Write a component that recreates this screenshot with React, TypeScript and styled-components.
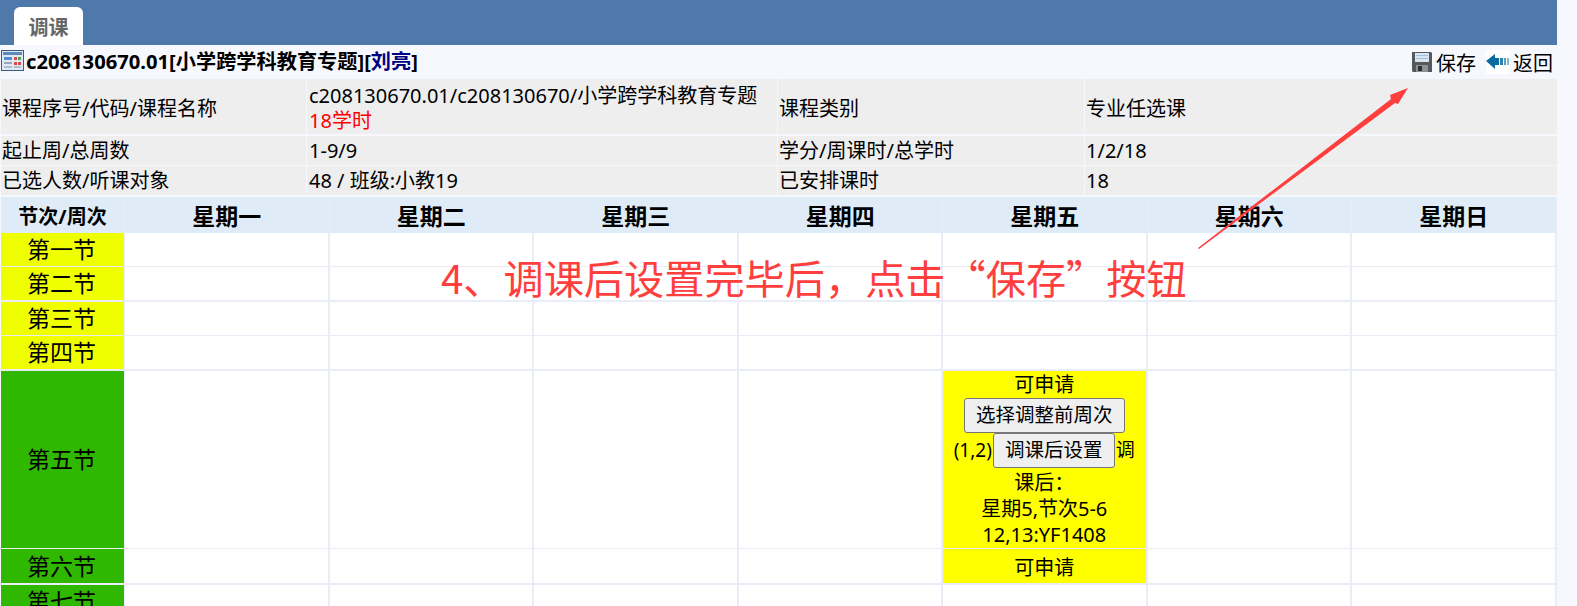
import React from "react"
import styled, { createGlobalStyle } from "styled-components"

const Global = createGlobalStyle`
html, body { margin: 0; padding: 0; background: #f6f8fd; overflow: hidden; }
body { font-family: "Noto Sans", "Noto Sans CJK SC", sans-serif; color: #000; }
`

const days = ["星期一", "星期二", "星期三", "星期四", "星期五", "星期六", "星期日"]

type Section = { name: string; tone: "yellow" | "green"; height: number; thick?: boolean }

const sections: Section[] = [
  { name: "第一节", tone: "yellow", height: 34 },
  { name: "第二节", tone: "yellow", height: 35, thick: true },
  { name: "第三节", tone: "yellow", height: 34 },
  { name: "第四节", tone: "yellow", height: 35, thick: true },
  { name: "第五节", tone: "green", height: 178 },
  { name: "第六节", tone: "green", height: 36, thick: true },
  { name: "第七节", tone: "green", height: 34 },
]

const App = () => {
  return (
    <Page>
      <Global />
      <TopBar>
        <Tab>调课</Tab>
      </TopBar>
      <Content>
        <TitleRow>
          <Title>
            <WindowIcon />
            c208130670.01[小学跨学科教育专题][<Teacher>刘亮</Teacher>]
          </Title>
          <Actions>
            <Action>
              <SaveIcon />
              保存
            </Action>
            <Action>
              <BackIcon />
              返回
            </Action>
          </Actions>
        </TitleRow>
        <InfoGrid>
          <TallCell $h={56} $thick>课程序号/代码/课程名称</TallCell>
          <TallCell $h={56} $thick>
            <div>c208130670.01/c208130670/小学跨学科教育专题</div>
            <RedText>18学时</RedText>
          </TallCell>
          <TallCell $h={56} $thick>课程类别</TallCell>
          <TallCell $h={56} $thick>专业任选课</TallCell>
          <InfoCell $h={29}>起止周/总周数</InfoCell>
          <InfoCell $h={29}>1-9/9</InfoCell>
          <InfoCell $h={29}>学分/周课时/总学时</InfoCell>
          <InfoCell $h={29}>1/2/18</InfoCell>
          <InfoCell $h={30} $thick>已选人数/听课对象</InfoCell>
          <InfoCell $h={30} $thick>48 / 班级:小教19</InfoCell>
          <InfoCell $h={30} $thick>已安排课时</InfoCell>
          <InfoCell $h={30} $thick>18</InfoCell>
        </InfoGrid>
        <Schedule>
          <HeadCell>节次/周次</HeadCell>
          {days.map((d) => (
            <HeadCell key={d} $big>
              {d}
            </HeadCell>
          ))}
          {sections.map((s, i) => (
            <React.Fragment key={s.name}>
              <SectionCell $tone={s.tone} $h={s.height} $thick={s.thick}>
                {s.name}
              </SectionCell>
              {days.map((d, j) => {
                if (j === 4 && i === 4) {
                  return (
                    <SlotCell key={d} $on $h={s.height} $thick={s.thick}>
                      <div>可申请</div>
                      <PlainButton>选择调整前周次</PlainButton>
                      <InlineRow>
                        (1,2)<ShiftedButton>调课后设置</ShiftedButton>调
                      </InlineRow>
                      <AfterLines>
                        <div>课后：</div>
                        <div>星期5,节次5-6</div>
                        <div>12,13:YF1408</div>
                      </AfterLines>
                    </SlotCell>
                  )
                }
                if (j === 4 && i === 5) {
                  return (
                    <SlotCell key={d} $on $h={s.height} $thick={s.thick}>
                      <LoneLabel>可申请</LoneLabel>
                    </SlotCell>
                  )
                }
                return <SlotCell key={d} $h={s.height} $thick={s.thick} />
              })}
            </React.Fragment>
          ))}
        </Schedule>
      </Content>
      <Note>4、调课后设置完毕后，点击“保存”按钮</Note>
      <NoteArrow viewBox="0 0 212 162" width="212" height="162">
        <polygon points="0,160 193,11 192,7 210,0 200,16 197,15 1,161" fill="#ff3e3e" />
      </NoteArrow>
    </Page>
  )
}

const WindowIcon = () => (
  <TitleSvg viewBox="0 0 23 21" width="23" height="21">
    <rect x="0.5" y="0.5" width="22" height="20" fill="#dfe9f3" stroke="#3c5a80" />
    <rect x="2" y="2" width="19" height="3" fill="#5d88bb" />
    <rect x="3" y="7" width="8" height="3" fill="#4f8fd0" />
    <rect x="3" y="12" width="8" height="2" fill="#9aa7b4" />
    <rect x="3" y="16" width="8" height="2" fill="#b5bec8" />
    <rect x="13" y="7" width="3" height="3" fill="#d94a4a" />
    <rect x="17" y="7" width="3" height="3" fill="#4aa05a" />
    <rect x="13" y="12" width="3" height="3" fill="#d94a4a" />
    <rect x="17" y="12" width="3" height="3" fill="#d94a4a" />
    <rect x="13" y="16" width="7" height="2" fill="#b5bec8" />
  </TitleSvg>
)

const SaveIcon = () => (
  <svg viewBox="0 0 22 22" width="22" height="22">
    <path d="M1 1h19l1 1v19l-1 0H2l-1-1z" fill="#55595c" />
    <rect x="4" y="2" width="14" height="9" fill="#d9e4ee" />
    <rect x="5" y="4" width="12" height="1" fill="#9fc0de" />
    <rect x="5" y="7" width="12" height="1" fill="#9fc0de" />
    <rect x="5" y="14" width="12" height="7" fill="#8e9295" />
    <rect x="7" y="15" width="4" height="5" fill="#2e3133" />
  </svg>
)

const BackIcon = () => (
  <BackBox>
    <svg viewBox="0 0 24 24" width="24" height="24">
      <polygon points="0,11 9,4 9,8 13,8 13,15 9,15 9,19" fill="#0a6a9e" />
      <rect x="14" y="8" width="3" height="7" fill="#2a7fae" />
      <rect x="18" y="8" width="2" height="7" fill="#5a9cc2" />
      <rect x="21" y="8" width="2" height="7" fill="#8ab8d3" />
    </svg>
  </BackBox>
)

export default App

const Page = styled.div`
position: relative;
width: 1577px;
height: 606px;
overflow: hidden;
`

const TopBar = styled.div`
width: 1557px;
height: 45px;
background-color: #5079ab;
display: flex;
align-items: flex-end;
padding-left: 14px;
box-sizing: border-box;
`

const Tab = styled.div`
width: 69px;
height: 38px;
background-color: #fff;
border-radius: 6px 6px 0 0;
color: #666;
font-weight: bold;
font-size: 20px;
display: flex;
align-items: center;
justify-content: center;
`

const Content = styled.div`
width: 1557px;
padding-left: 1px;
box-sizing: border-box;
`

const TitleRow = styled.div`
height: 34px;
display: flex;
justify-content: space-between;
align-items: center;
`

const Title = styled.div`
font-size: 20.2px;
font-weight: bold;
display: flex;
align-items: center;
line-height: 30px;
margin-top: -3px;
white-space: pre;
`

const TitleSvg = styled.svg`
margin-right: 2px;
`

const Teacher = styled.span`
color: #000080;
`

const Actions = styled.div`
display: flex;
gap: 10px;
padding-right: 4px;
`

const Action = styled.div`
font-size: 20px;
display: flex;
align-items: center;
gap: 3px;
`

const BackBox = styled.div`
width: 24px;
height: 24px;
background: #fff;
display: flex;
`

const InfoGrid = styled.div`
display: grid;
grid-template-columns: 305px 470px 306px 472px;
column-gap: 1px;
row-gap: 1px;
width: 1555px;
`

const InfoCell = styled.div<{ $h: number; $thick?: boolean }>`
height: ${(p) => p.$h}px;
background-color: #eeeeee;
background-clip: padding-box;
border-bottom: ${(p) => (p.$thick ? "1px solid #f6f8fd" : "none")};
font-size: 20px;
line-height: 25px;
padding-left: 1px;
box-sizing: border-box;
display: flex;
flex-direction: column;
justify-content: center;

&:nth-child(4n + 2) {
  padding-left: 2px;
}
`

const TallCell = styled(InfoCell)`
padding-top: 3px;
`

const RedText = styled.div`
color: #ff0000;
`

const Schedule = styled.div`
display: grid;
grid-template-columns: 124px repeat(7, 204.5px);
margin-top: 1px;
`

const HeadCell = styled.div<{ $big?: boolean }>`
height: 36px;
background-color: #dfecf8;
border-right: 1px solid #e8edf8;
box-sizing: border-box;
font-weight: bold;
font-size: ${(p) => (p.$big ? 23 : 20)}px;
display: flex;
align-items: center;
justify-content: center;
`

const SectionCell = styled.div<{ $tone: "yellow" | "green"; $h: number; $thick?: boolean }>`
height: ${(p) => p.$h}px;
background-color: ${(p) => (p.$tone === "yellow" ? "#f0ff00" : "#30b800")};
background-clip: padding-box;
border-right: 1px solid #e8edf8;
border-bottom: ${(p) => (p.$thick ? 2 : 1)}px solid #e8edf8;
box-sizing: border-box;
padding: 0 2px 3px 0;
font-size: 23px;
display: flex;
align-items: center;
justify-content: center;
`

const SlotCell = styled.div<{ $on?: boolean; $h: number; $thick?: boolean }>`
height: ${(p) => p.$h}px;
background-clip: padding-box;
background-color: ${(p) => (p.$on ? "#ffff00" : "#fff")};
border-right: 2px solid #e8edf8;
border-bottom: ${(p) => (p.$thick ? 2 : 1)}px solid #e8edf8;
box-sizing: border-box;
font-size: 20px;
line-height: 26px;
display: flex;
flex-direction: column;
align-items: center;
justify-content: center;
text-align: center;
`

const LoneLabel = styled.div`
padding-top: 4px;
`

const PlainButton = styled.button`
font-family: inherit;
font-size: 19.5px;
line-height: 24px;
height: 35px;
width: 161px;
padding: 0;
background-color: #efefef;
border: 1px solid #767676;
border-radius: 3px;
color: #000;
`

const InlineRow = styled.div`
display: flex;
align-items: center;
height: 35px;
font-size: 19px;
white-space: nowrap;
`

const ShiftedButton = styled(PlainButton)`
width: 122px;
margin: 0 1px;
`

const AfterLines = styled.div`
margin-top: 2px;
`

const Note = styled.div`
position: absolute;
left: 441px;
top: 252px;
font-family: "Noto Sans CJK SC", sans-serif;
font-size: 40.2px;
line-height: 50px;
color: #ff3e3e;
white-space: nowrap;
`

const NoteArrow = styled.svg`
position: absolute;
left: 1198px;
top: 88px;
`
